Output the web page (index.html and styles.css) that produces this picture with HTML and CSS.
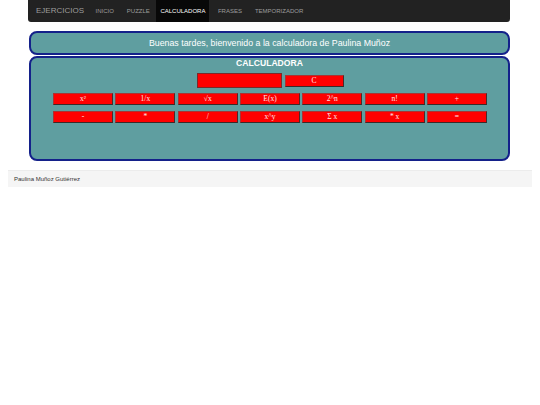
FILE: index.html
```html
<!DOCTYPE html>
<html lang="es">
<head>
<meta charset="utf-8">
<title>Calculadora</title>
<link rel="stylesheet" href="styles.css">
</head>
<body>
<div class="container">
  <nav class="navbar">
    <span class="brand">EJERCICIOS</span>
    <ul class="nav">
      <li>INICIO</li>
      <li>PUZZLE</li>
      <li class="active">CALCULADORA</li>
      <li>FRASES</li>
      <li>TEMPORIZADOR</li>
    </ul>
  </nav>
  <div class="greeting">Buenas tardes, bienvenido a la calculadora de Paulina Muñoz</div>
  <div class="calc">
    <div class="title">CALCULADORA</div>
    <div class="display-row">
      <div class="display"></div>
      <button class="btn clear">C</button>
    </div>
    <div class="keys">
      <button class="btn">x²</button>
      <button class="btn">1/x</button>
      <button class="btn">√x</button>
      <button class="btn">E(x)</button>
      <button class="btn">2^n</button>
      <button class="btn">n!</button>
      <button class="btn">+</button>
      <button class="btn">-</button>
      <button class="btn">*</button>
      <button class="btn">/</button>
      <button class="btn">x^y</button>
      <button class="btn">Σ x</button>
      <button class="btn">* x</button>
      <button class="btn">=</button>
    </div>
  </div>
</div>
<footer class="footer">Paulina Muñoz Gutiérrez</footer>
</body>
</html>
```

FILE: styles.css
```css
html, body {
  background: #fff;
}
body {
  margin: 0;
  font-family: "Liberation Sans", Arial, sans-serif;
}
.container {
  width: 482px;
  margin: 0 0 0 28px;
}
.navbar {
  height: 22px;
  background: #222;
  border-radius: 0 0 3px 3px;
  display: flex;
  align-items: stretch;
  padding-left: 8px;
}
.brand {
  color: #9d9d9d;
  font-size: 8px;
  line-height: 22px;
  margin-right: 5px;
}
.nav {
  list-style: none;
  margin: 0;
  padding: 0;
  display: flex;
}
.nav li {
  color: #9d9d9d;
  font-size: 6px;
  line-height: 22px;
  padding: 0 6.5px;
}
.nav li.active {
  background: #080808;
  color: #fff;
  padding: 0 4px;
  margin: 0 2px 0 0;
}
.greeting {
  margin-top: 9px;
  margin-left: 1px;
  height: 20px;
  border: 2px solid #14218a;
  border-radius: 8px;
  background: #5f9ea0;
  color: #fff;
  font-size: 8.8px;
  line-height: 20px;
  text-align: center;
}
.calc {
  margin-top: 1px;
  margin-left: 1px;
  height: 101px;
  border: 2px solid #14218a;
  border-radius: 8px;
  background: #5f9ea0;
}
.title {
  color: #fff;
  font-weight: bold;
  font-size: 8.6px;
  text-align: center;
  line-height: 10px;
  margin-top: 0;
}
.display-row {
  display: flex;
  justify-content: center;
  align-items: center;
  gap: 3px;
  margin-top: 5px;
  padding-left: 1px;
}
.display {
  width: 83px;
  height: 13px;
  background: #ff0000;
  border: 1px solid #7a2a2a;
}
.btn {
  font-family: "Liberation Serif", "Times New Roman", serif;
  font-size: 7.5px;
  color: #ffe8e8;
  background: #ff0000;
  border: 1px solid;
  border-color: #a33 #4a2a2a #3a2a2a #a33;
  height: 12px;
  padding: 0;
  margin: 0;
  line-height: 10px;
}
.clear {
  width: 59px;
}
.keys {
  display: grid;
  grid-template-columns: repeat(7, 60px);
  column-gap: 2.3px;
  row-gap: 6px;
  justify-content: center;
  margin-top: 5px;
  padding-left: 1px;
}
.keys .btn {
  width: 60px;
}
.footer {
  margin: 9px 8px 0;
  height: 16px;
  background: #f5f5f5;
  border-top: 1px solid #ececec;
  color: #333;
  font-size: 6px;
  line-height: 16px;
  padding-left: 6px;
}
```
